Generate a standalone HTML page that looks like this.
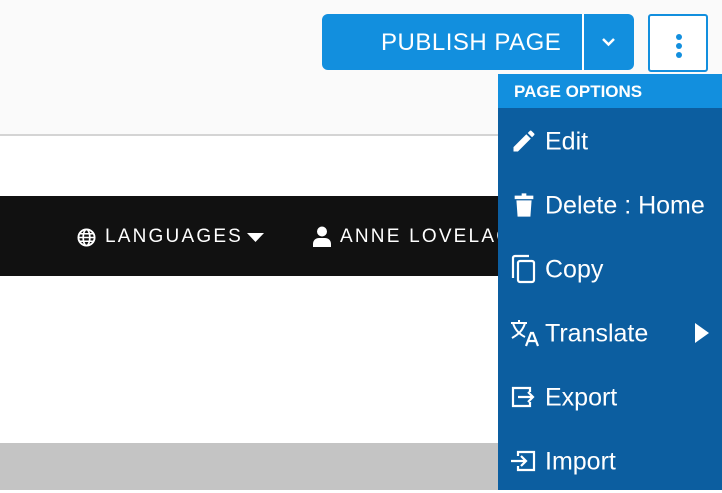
<!DOCTYPE html>
<html><head><style>
body{margin:0;width:722px;height:490px;overflow:hidden;position:relative;font-family:"Liberation Sans",sans-serif;background:#fff}
.a{position:absolute}
.mi{position:absolute;left:498px;width:224px;height:64px;color:#fff;font-size:25px}
.mi span{position:absolute;left:47px;top:50%;transform:translateY(-47%);white-space:nowrap}
.mi svg{position:absolute;left:12px;top:50%;transform:translateY(-50%)}
</style></head><body>
<div class="a" style="left:0;top:0;width:722px;height:134px;background:#fafafa"></div>
<div class="a" style="left:0;top:134px;width:722px;height:2px;background:#d4d4d4"></div>
<div class="a" style="left:0;top:196px;width:722px;height:80px;background:#111"></div>
<div class="a" style="left:0;top:443px;width:722px;height:47px;background:#c4c4c4"></div>
<svg class="a" style="left:77px;top:228px" width="19" height="19" viewBox="0 0 20 20"><circle cx="10" cy="10" r="8.5" fill="none" stroke="#fff" stroke-width="2"/><ellipse cx="10" cy="10" rx="3.5" ry="8.5" fill="none" stroke="#fff" stroke-width="1.8"/><path d="M2 10h16M3 6h14M3 14h14" stroke="#fff" stroke-width="1.6"/></svg>
<div class="a" style="left:105px;top:226px;color:#fff;font-size:19px;letter-spacing:2.2px">LANGUAGES</div>
<svg class="a" style="left:247px;top:233px" width="17" height="9"><path d="M0 0h17L8.5 9z" fill="#fff"/></svg>
<svg class="a" style="left:313px;top:226px" width="18" height="21" viewBox="0 0 18 21"><circle cx="9" cy="5.5" r="5" fill="#fff"/><path d="M0 21v-3c0-4 3-6 6-6h6c3 0 6 2 6 6v3z" fill="#fff"/></svg>
<div class="a" style="left:340px;top:226px;color:#fff;font-size:19px;letter-spacing:2.2px;white-space:nowrap">ANNE LOVELACE</div>
<div class="a" style="left:322px;top:14px;width:312px;height:56px;background:#128fde;border-radius:6px"></div>
<div class="a" style="left:582px;top:14px;width:2px;height:56px;background:#fff"></div>
<div class="a" style="left:381px;top:29px;color:#fff;font-size:24px;letter-spacing:0.5px">PUBLISH PAGE</div>
<svg class="a" style="left:601px;top:37px" width="15" height="10"><path d="M2 2l5.5 5.5L13 2" stroke="#fff" stroke-width="2.5" fill="none"/></svg>
<div class="a" style="left:648px;top:14px;width:56px;height:54px;border:2px solid #128fde;border-radius:3px;background:#fff"></div>
<div class="a" style="left:676px;top:34px;width:6px;height:6px;border-radius:3px;background:#128fde"></div>
<div class="a" style="left:676px;top:43px;width:6px;height:6px;border-radius:3px;background:#128fde"></div>
<div class="a" style="left:676px;top:52px;width:6px;height:6px;border-radius:3px;background:#128fde"></div>
<div class="a" style="left:498px;top:74px;width:224px;height:34px;background:#128fde"></div>
<div class="a" style="left:514px;top:82px;color:#fff;font-size:17px;font-weight:bold">PAGE OPTIONS</div>
<div class="a" style="left:498px;top:108px;width:224px;height:382px;background:#0c5ea0"></div>
<div class="mi" style="top:109px"><svg width="28" height="28" viewBox="0 0 24 24"><path d="M3 17.2V21h3.8L17.8 10 14 6.2zM20.7 7c.4-.4.4-1 0-1.4l-2.3-2.3c-.4-.4-1-.4-1.4 0l-1.8 1.8 3.7 3.7z" fill="#fff"/></svg><span>Edit</span></div>
<div class="mi" style="top:173px"><svg width="28" height="28" viewBox="0 0 24 24"><path d="M4 4h16v3H4zM10 2h4v2h-4zM5.5 8h13l-1 14h-11z" fill="#fff"/></svg><span>Delete : Home</span></div>
<div class="mi" style="top:237px"><svg width="28" height="30" viewBox="0 0 28 30"><path d="M3 24V4a2 2 0 0 1 2-2h14" stroke="#fff" stroke-width="2.2" fill="none"/><rect x="8" y="7" width="16" height="21" rx="2" stroke="#fff" stroke-width="2.2" fill="none"/></svg><span>Copy</span></div>
<div class="mi" style="top:301px"><svg width="30" height="28" viewBox="0 0 30 28"><path d="M1 4h16M9 1v3M3 4c2 7 6 11 12 14M15 4c-2 7-6 11-13 15" stroke="#fff" stroke-width="2" fill="none"/><path d="M16 27l5-13h2l5 13M18 22h8" stroke="#fff" stroke-width="2.2" fill="none"/></svg><span>Translate</span></div>
<svg class="a" style="left:695px;top:323px" width="14" height="20"><path d="M0 0l14 10L0 20z" fill="#fff"/></svg>
<div class="mi" style="top:365px"><svg width="26" height="24" viewBox="0 0 26 24"><path d="M20 7V3H3v18h17v-4" stroke="#fff" stroke-width="2.2" fill="none"/><path d="M8 12h15M18 7l5 5-5 5" stroke="#fff" stroke-width="2.2" fill="none"/></svg><span>Export</span></div>
<div class="mi" style="top:429px"><svg width="26" height="24" viewBox="0 0 26 24"><path d="M8 7V3h16v18H8v-4" stroke="#fff" stroke-width="2.2" fill="none"/><path d="M1 12h15M11 7l5 5-5 5" stroke="#fff" stroke-width="2.2" fill="none"/></svg><span>Import</span></div>
</body></html>
